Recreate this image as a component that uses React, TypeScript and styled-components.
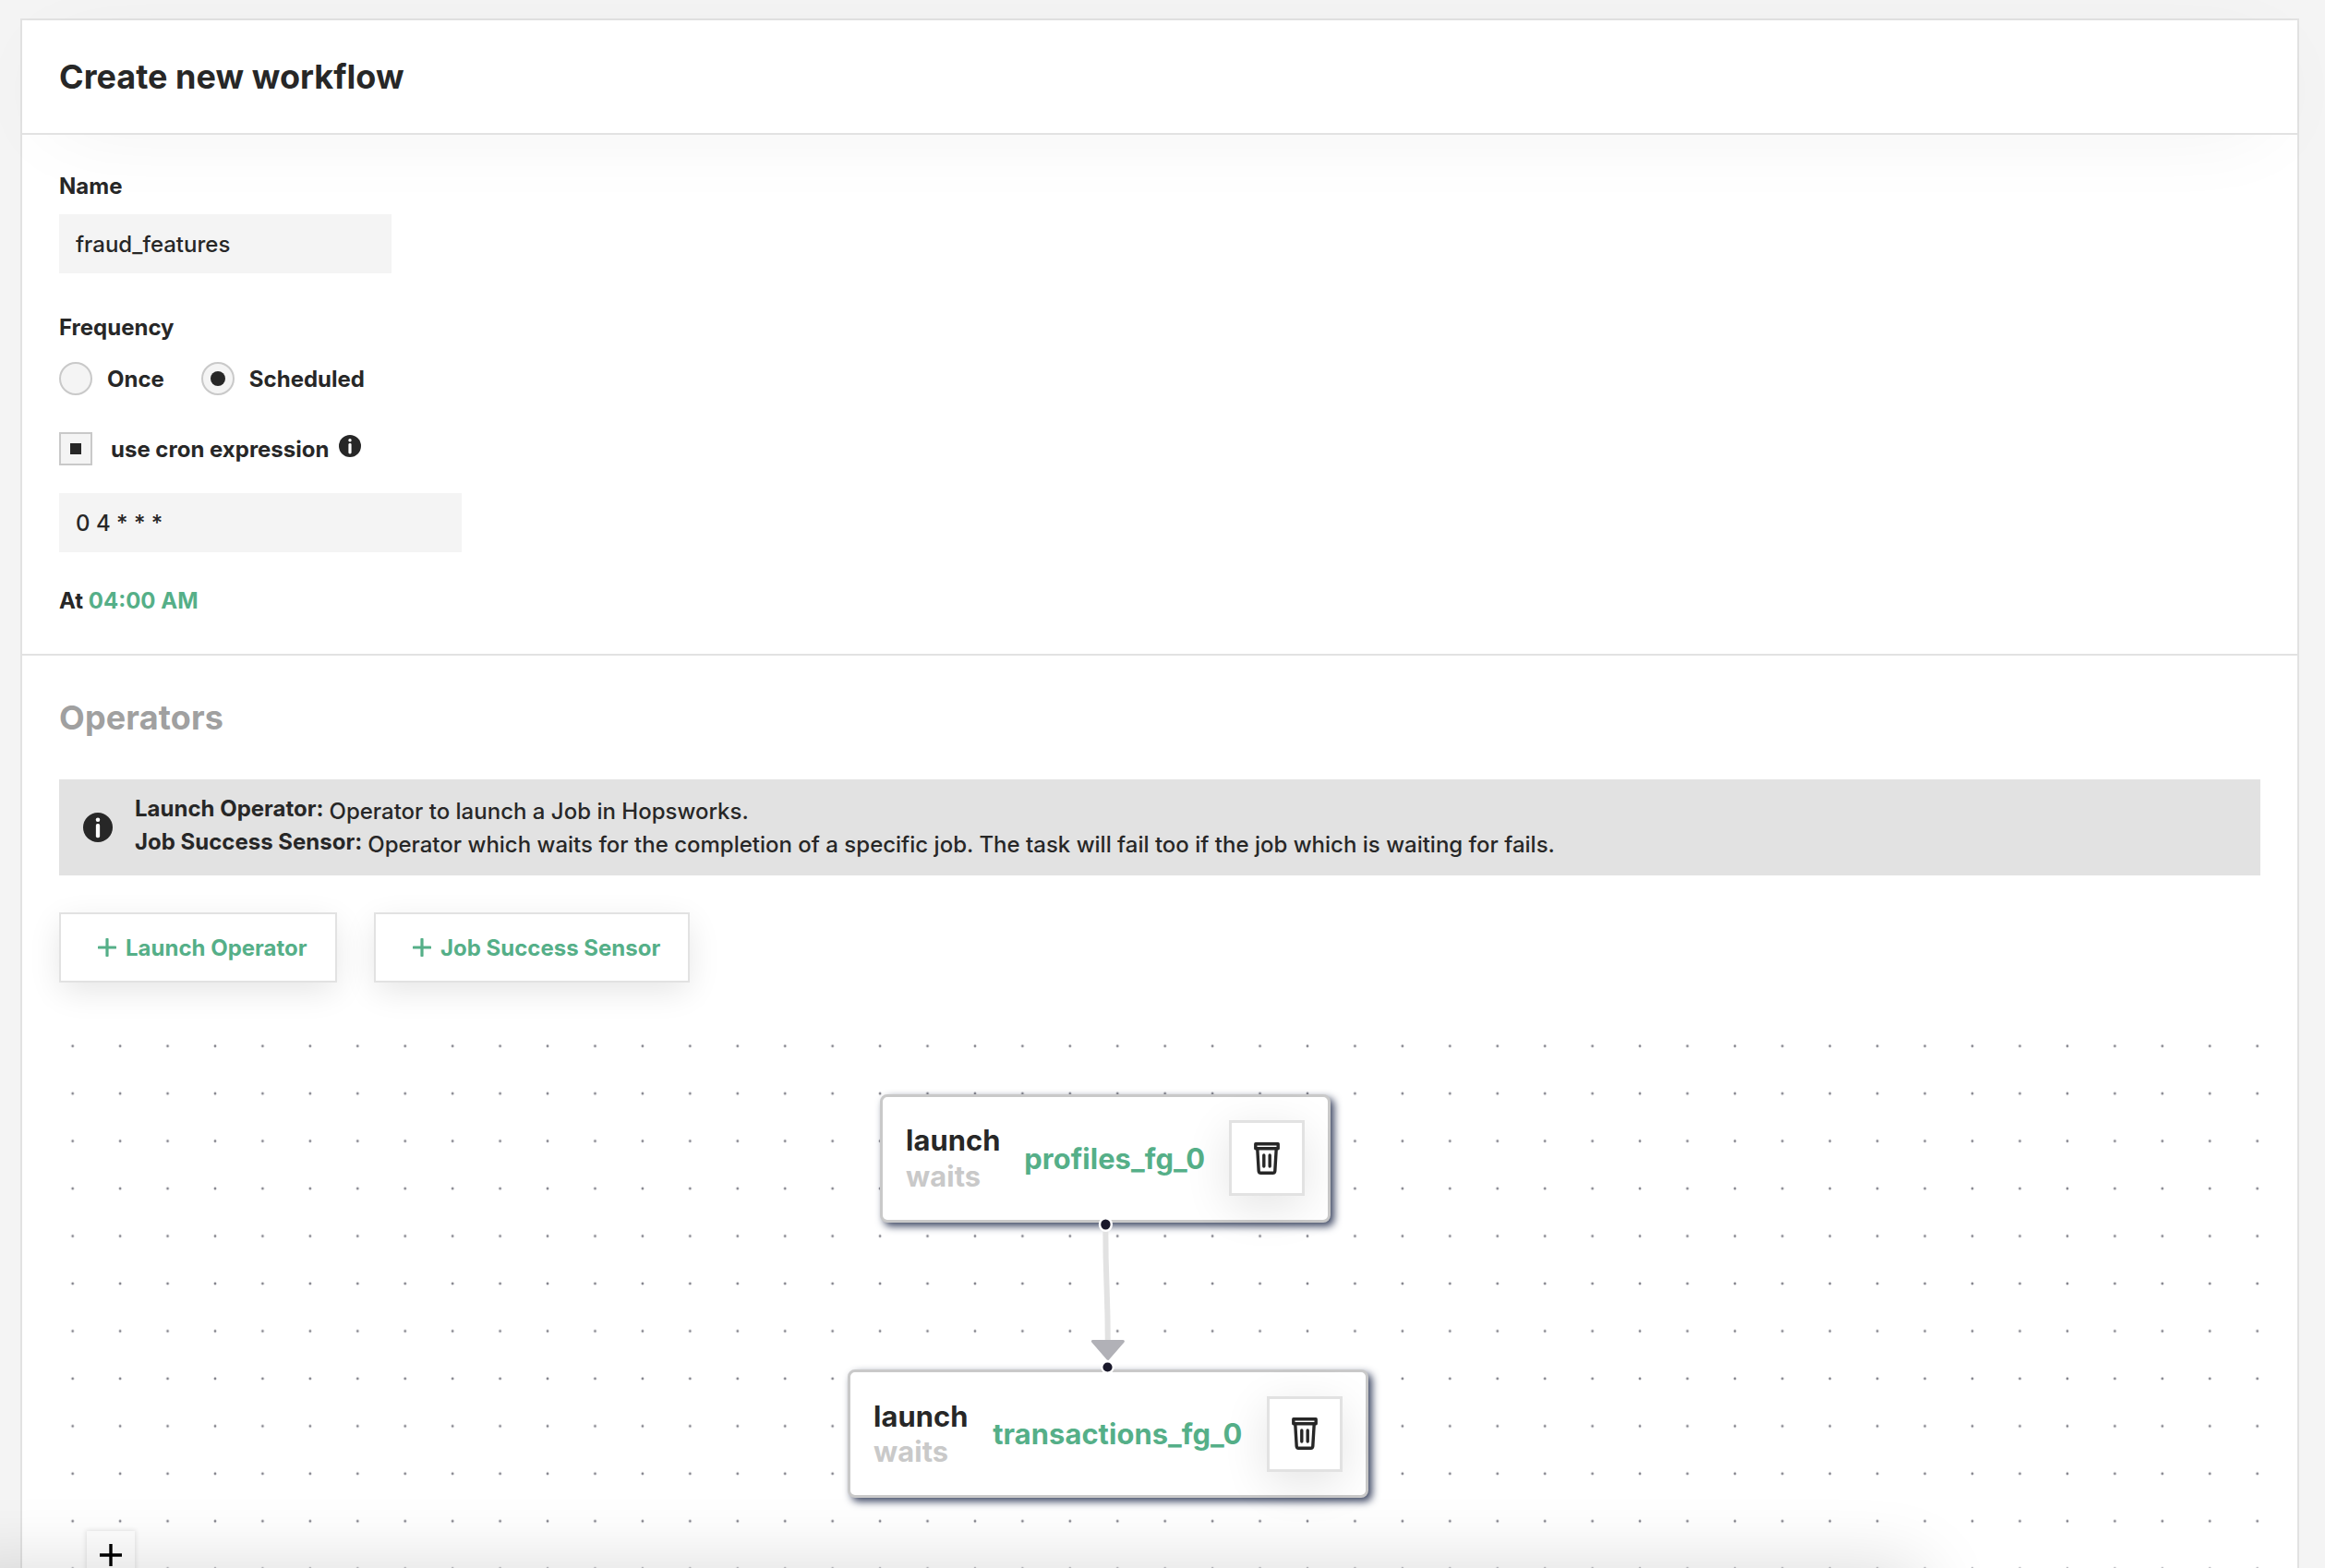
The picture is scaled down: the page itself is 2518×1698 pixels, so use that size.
import React from "react";
import styled, { createGlobalStyle } from "styled-components";

const c = {
  text: "#272727",
  green: "#55af88",
  line: "#e2e2e2",
  control: "#c9c9c9",
  field: "#f4f4f4",
  muted: "#a0a0a0",
};

const GlobalStyle = createGlobalStyle`
  * { box-sizing: border-box; }
  body {
    margin: 0;
    background: #f4f4f4;
    color: ${c.text};
    font-family: Inter, "Liberation Sans", sans-serif;
    font-size: 24px;
    font-weight: 500;
  }
`;

const Page = styled.main`
  position: relative;
  height: 1698px;
  padding: 20px 28px 0 22px;
  overflow: hidden;
`;

const Card = styled.section`
  display: flex;
  flex-direction: column;
  height: 100%;
  border: 2px solid ${c.line};
  border-bottom: 0;
  background: #fff;
`;

const Header = styled.header`
  display: flex;
  align-items: center;
  height: 124px;
  padding: 0 40px;
  background: #fff;
  border-bottom: 2px solid ${c.line};
  box-shadow: 0 14px 100px -34px rgba(0, 0, 0, 0.09);
  clip-path: inset(-22px -30px -120px -24px);
`;

const Heading = styled.h1<{ $muted?: boolean }>`
  margin: 0;
  font-size: 36px;
  line-height: 44px;
  font-weight: 700;
  letter-spacing: ${(p) => (p.$muted ? 0.15 : 0.03)}px;
  color: ${(p) => (p.$muted ? c.muted : c.text)};
`;

const FormSection = styled.div`
  display: flex;
  flex-direction: column;
  align-items: flex-start;
  height: 564px;
  padding: 41px 40px 0;
  border-bottom: 2px solid ${c.line};
`;

const Label = styled.span<{ $top?: number }>`
  margin-top: ${(p) => p.$top ?? 0}px;
  font-weight: 700;
  line-height: 30px;
`;

const Field = styled.input<{ $width: number; $top: number }>`
  width: ${(p) => p.$width}px;
  height: 64px;
  margin: ${(p) => p.$top}px 0 0;
  padding: 0 18px;
  border: 0;
  outline: 0;
  background: ${c.field};
  color: ${c.text};
  font: 500 24px Inter, "Liberation Sans", sans-serif;
`;

const RadioRow = styled.div`
  display: flex;
  gap: 40px;
  margin-top: 22px;
`;

const Choice = styled.label<{ $gap: number }>`
  display: flex;
  align-items: center;
  gap: ${(p) => p.$gap}px;
  height: 36px;
  font-weight: 700;
  line-height: 30px;
`;

const ChoiceText = styled.span`
  padding-top: 2px;
`;

const CheckRow = styled.div`
  display: flex;
  align-items: center;
  gap: 11px;
  margin-top: 40px;

  svg {
    margin-bottom: 6px;
  }
`;

const Mark = styled.span<{ $round?: boolean; $on?: boolean }>`
  display: flex;
  align-items: center;
  justify-content: center;
  width: 36px;
  height: 36px;
  border: 2px solid ${c.control};
  border-radius: ${(p) => (p.$round ? "50%" : "0")};
  background: ${c.field};

  &::after {
    content: "";
    display: ${(p) => (p.$on ? "block" : "none")};
    width: ${(p) => (p.$round ? 16 : 12)}px;
    height: ${(p) => (p.$round ? 16 : 12)}px;
    border-radius: ${(p) => (p.$round ? "50%" : "0")};
    background: ${c.text};
  }
`;

const Green = styled.span`
  color: ${c.green};
`;

const Operators = styled.div`
  display: flex;
  flex-direction: column;
  flex: 1;
  min-height: 0;
  padding: 45px 40px 0;
`;

const Banner = styled.div`
  display: flex;
  align-items: center;
  gap: 24px;
  height: 104px;
  margin-top: 45px;
  padding: 0 26px;
  flex: none;
  background: ${c.line};
`;

const BannerText = styled.div`
  padding-top: 2px;
`;

const BannerLine = styled.div`
  display: flex;
  align-items: center;
  gap: 6px;
  height: 36px;
  line-height: 30px;
  white-space: nowrap;

  b {
    font-weight: 700;
    margin-bottom: 6px;
  }
`;

const Buttons = styled.div`
  display: flex;
  gap: 40px;
  margin-top: 40px;
`;

const AddButton = styled.button<{ $width: number }>`
  display: flex;
  align-items: center;
  gap: 10px;
  width: ${(p) => p.$width}px;
  height: 76px;
  padding: 0 0 0 40px;
  border: 2px solid ${c.line};
  background: #fff;
  box-shadow: 0 10px 36px -2px rgba(0, 0, 0, 0.11);
  color: ${c.green};
  font: 700 24px Inter, "Liberation Sans", sans-serif;
  white-space: nowrap;
`;

const Canvas = styled.div`
  position: relative;
  flex: 1;
  min-height: 0;
  margin-top: 40px;
`;

const CanvasDrawing = styled.svg`
  position: absolute;
  inset: 0;
  width: 100%;
  height: 100%;
`;

const Node = styled.div<{ $x: number; $y: number; $width: number }>`
  position: absolute;
  left: ${(p) => p.$x}px;
  top: ${(p) => p.$y}px;
  width: ${(p) => p.$width}px;
  height: 138.5px;
  display: flex;
  align-items: center;
  justify-content: space-between;
  padding: 0 25px;
  border: 3px solid ${c.control};
  border-radius: 8px;
  background: #fff;
  box-shadow: 4px 4px 8px #3d4763;
  font-size: 30.86px;
  font-weight: 700;
  letter-spacing: 0.07px;
`;

const NodeKind = styled.div`
  display: flex;
  flex-direction: column;
  line-height: 38.5px;
  padding-top: 1px;
`;

const Waits = styled.span`
  color: ${c.control};
`;

const DeleteButton = styled.button`
  display: flex;
  align-items: center;
  justify-content: center;
  width: 82px;
  height: 82px;
  padding: 0;
  border: 3px solid ${c.line};
  background: #fff;
  box-shadow: 0 12px 50px rgba(0, 0, 0, 0.11);
`;

const ZoomIn = styled.button`
  position: absolute;
  left: 30px;
  top: 554px;
  display: flex;
  justify-content: center;
  width: 52px;
  height: 54px;
  padding: 14px 0 0;
  border: 0;
  background: #fefefe;
  box-shadow: 0 0 5px 1px rgba(0, 0, 0, 0.1);
`;

const BottomShade = styled.div`
  position: absolute;
  left: -60px;
  top: 1698px;
  width: 2140px;
  height: 160px;
  box-shadow: 0 0 80px rgba(0, 0, 0, 0.15);
  pointer-events: none;
`;

const InfoIcon = ({ size }: { size: number }) => (
  <svg width={size} height={size} viewBox="0 0 24 24">
    <circle cx="12" cy="12" r="12" fill={c.text} />
    <circle cx="12" cy="5.8" r="1.7" fill="#fff" />
    <rect x="10.4" y="9" width="3.2" height="11.4" rx="1.4" fill="#fff" />
  </svg>
);

const PlusIcon = () => (
  <svg width="20" height="20" viewBox="0 0 20 20">
    <path d="M10 1.2v17.6M1.2 10h17.6" stroke={c.green} strokeWidth="3.2" strokeLinecap="round" />
  </svg>
);

const TrashIcon = () => (
  <svg width="28" height="35" viewBox="0 0 28 35" fill="none" stroke={c.text} strokeWidth="3.4" strokeLinejoin="round" strokeLinecap="round">
    <path d="M1.8 1.8h24.4v5H1.8z" />
    <path d="M3.8 7.5l1.4 23.6q.2 2.1 2.1 2.1h13.4q1.9 0 2.1-2.1L24.2 7.5" />
    <path d="M10.8 14v12M17.2 14v12" />
  </svg>
);

const TaskNode = ({ x, y, width, name }: { x: number; y: number; width: number; name: string }) => (
  <Node $x={x} $y={y} $width={width}>
    <NodeKind>
      <span>launch</span>
      <Waits>waits</Waits>
    </NodeKind>
    <Green>{name}</Green>
    <DeleteButton aria-label={`Delete ${name}`}>
      <TrashIcon />
    </DeleteButton>
  </Node>
);

export default function App() {
  return (
    <>
      <GlobalStyle />
      <Page>
        <Card>
          <Header>
            <Heading>Create new workflow</Heading>
          </Header>

          <FormSection>
            <Label>Name</Label>
            <Field $width={360} $top={15} defaultValue="fraud_features" />
            <Label $top={44}>Frequency</Label>
            <RadioRow>
              <Choice $gap={16}>
                <Mark $round />
                <ChoiceText>Once</ChoiceText>
              </Choice>
              <Choice $gap={16}>
                <Mark $round $on />
                <ChoiceText>Scheduled</ChoiceText>
              </Choice>
            </RadioRow>
            <CheckRow>
              <Choice $gap={20}>
                <Mark $on />
                <ChoiceText>use cron expression</ChoiceText>
              </Choice>
              <InfoIcon size={24} />
            </CheckRow>
            <Field $width={436} $top={30} defaultValue="0 4 * * *" />
            <Label $top={38}>
              At <Green>04:00 AM</Green>
            </Label>
          </FormSection>

          <Operators>
            <Heading as="h2" $muted>
              Operators
            </Heading>
            <Banner>
              <InfoIcon size={32} />
              <BannerText>
                <BannerLine>
                  <b>Launch Operator:</b>
                  <span>Operator to launch a Job in Hopsworks.</span>
                </BannerLine>
                <BannerLine>
                  <b>Job Success Sensor:</b>
                  <span>
                    Operator which waits for the completion of a specific job. The task will fail too if the job
                    which is waiting for fails.
                  </span>
                </BannerLine>
              </BannerText>
            </Banner>
            <Buttons>
              <AddButton $width={301}>
                <PlusIcon />
                Launch Operator
              </AddButton>
              <AddButton $width={342}>
                <PlusIcon />
                Job Success Sensor
              </AddButton>
            </Buttons>

            <Canvas>
              <CanvasDrawing>
                <defs>
                  <pattern id="dots" x="-11.02" y="3.08" width="51.435" height="51.45" patternUnits="userSpaceOnUse">
                    <circle cx="25.72" cy="25.72" r="1.4" fill="#81818a" />
                  </pattern>
                </defs>
                <rect width="100%" height="100%" fill="url(#dots)" />
              </CanvasDrawing>
              <TaskNode x={889} y={81} width={488} name="profiles_fg_0" />
              <TaskNode x={854} y={379.3} width={564} name="transactions_fg_0" />
              <CanvasDrawing>
                <path d="M1133.3 224C1133.3 290 1135.8 290 1135.8 352" fill="none" stroke={c.line} strokeWidth="6" />
                <path
                  d="M1119.4 348.4h33L1135.9 367.4z"
                  fill="#b1b1b7"
                  stroke="#b1b1b7"
                  strokeWidth="3"
                  strokeLinejoin="round"
                />
                <ellipse cx="1133.4" cy="222" rx="6.4" ry="6.8" fill="#1a192b" stroke="#fff" strokeWidth="2.4" />
                <ellipse cx="1135.5" cy="376.5" rx="6.2" ry="6.2" fill="#1a192b" stroke="#fff" strokeWidth="2.2" />
              </CanvasDrawing>
              <ZoomIn aria-label="Zoom in">
                <svg width="24" height="24" viewBox="0 0 24 24">
                  <path d="M12 0v24M0 12h24" stroke="#000" strokeWidth="3.4" />
                </svg>
              </ZoomIn>
            </Canvas>
          </Operators>
        </Card>
        <BottomShade />
      </Page>
    </>
  );
}
